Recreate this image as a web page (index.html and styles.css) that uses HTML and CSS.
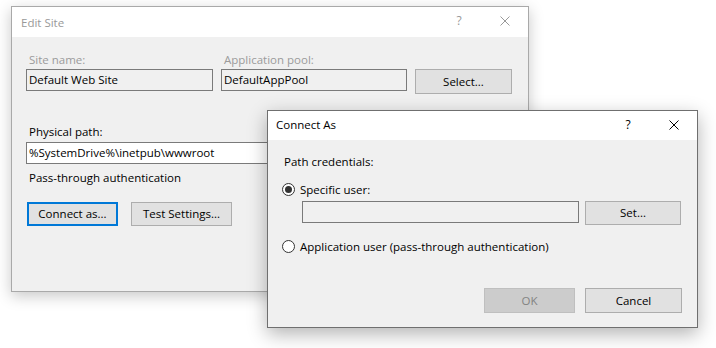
FILE: index.html
```html
<!DOCTYPE html>
<html>
<head>
<meta charset="utf-8">
<link rel="stylesheet" href="styles.css">
</head>
<body>
<div class="desktop">
  <div class="window edit-site inactive">
    <div class="titlebar">
      <span class="title">Edit Site</span>
      <div class="caption">
        <span class="cap-btn help">?</span>
        <span class="cap-btn close"><svg width="10" height="10" viewBox="0 0 10 10"><path d="M0.5 0.5 L9.5 9.5 M9.5 0.5 L0.5 9.5" stroke="currentColor" stroke-width="1" fill="none"/></svg></span>
      </div>
    </div>
    <div class="body">
      <div class="fields">
        <div class="field site">
          <div class="lbl disabled">Site name:</div>
          <div class="textbox readonly">Default Web Site</div>
        </div>
        <div class="field pool">
          <div class="lbl disabled">Application pool:</div>
          <div class="textbox readonly">DefaultAppPool</div>
        </div>
        <div class="btn select">Select...</div>
      </div>
      <div class="lbl path-lbl">Physical path:</div>
      <div class="textbox path">%SystemDrive%\inetpub\wwwroot</div>
      <div class="lbl auth">Pass-through authentication</div>
      <div class="btn-row">
        <div class="btn focused connect">Connect as...</div>
        <div class="btn test">Test Settings...</div>
      </div>
    </div>
  </div>

  <div class="window connect-as active">
    <div class="titlebar">
      <span class="title">Connect As</span>
      <div class="caption">
        <span class="cap-btn help">?</span>
        <span class="cap-btn close"><svg width="10" height="10" viewBox="0 0 10 10"><path d="M0.5 0.5 L9.5 9.5 M9.5 0.5 L0.5 9.5" stroke="currentColor" stroke-width="1" fill="none"/></svg></span>
      </div>
    </div>
    <div class="body">
      <div class="lbl cred">Path credentials:</div>
      <div class="radio-row first">
        <span class="radio checked"></span>
        <span class="radio-text">Specific user:</span>
      </div>
      <div class="user-row">
        <div class="textbox readonly user"></div>
        <div class="btn set">Set...</div>
      </div>
      <div class="radio-row second">
        <span class="radio"></span>
        <span class="radio-text">Application user (pass-through authentication)</span>
      </div>
      <div class="dlg-buttons">
        <div class="btn disabled ok">OK</div>
        <div class="btn cancel">Cancel</div>
      </div>
    </div>
  </div>
</div>
</body>
</html>
```

FILE: styles.css
```css
* { box-sizing: border-box; }
html, body {
  margin: 0;
  padding: 0;
  background: #ffffff;
}
body {
  font-family: "Open Sans", "Noto Sans", sans-serif;
  font-size: 11.5px;
  color: #000;
}
.desktop {
  position: relative;
  width: 716px;
  height: 348px;
  overflow: hidden;
}
.window {
  position: absolute;
  display: flex;
  flex-direction: column;
  background: #f0f0f0;
}
.edit-site {
  left: 11px;
  top: 6px;
  width: 518px;
  height: 286px;
  border: 1px solid #a9a9a9;
  box-shadow: 0 4px 14px rgba(0,0,0,0.22);
}
.connect-as {
  left: 267px;
  top: 110px;
  width: 431px;
  height: 218px;
  border: 1px solid #6f6f6f;
  box-shadow: 0 6px 18px rgba(0,0,0,0.3);
}
.titlebar {
  display: flex;
  align-items: center;
  height: 30px;
  background: #ffffff;
  flex: none;
}
.connect-as .titlebar { height: 29px; }
.title {
  flex: 1;
  padding-left: 9px;
  padding-top: 1px;
}
.connect-as .title { padding-left: 8px; padding-top: 0; padding-bottom: 2px; }
.inactive .titlebar { color: #999999; }
.active .titlebar { color: #000000; }
.caption {
  display: flex;
  height: 100%;
}
.cap-btn {
  width: 46px;
  height: 100%;
  display: flex;
  align-items: center;
  justify-content: center;
}
.help { font-size: 12px; padding-bottom: 3px; }
.close svg { display: block; margin-top: -2px; }

.body {
  flex: 1;
  display: flex;
  flex-direction: column;
  align-items: flex-start;
}
.lbl {
  line-height: 15px;
  height: 15px;
  margin-left: 3px;
  white-space: nowrap;
}
.lbl.disabled { color: #9b9b9b; }

.textbox {
  height: 22px;
  border: 1px solid #7a7a7a;
  background: #ffffff;
  line-height: 20px;
  padding-left: 2px;
  white-space: nowrap;
  overflow: hidden;
}
.textbox.readonly { background: #f0f0f0; }

.btn {
  height: 25px;
  border: 1px solid #adadad;
  background: #e1e1e1;
  display: flex;
  align-items: center;
  justify-content: center;
  white-space: nowrap;
  padding-bottom: 1px;
}
.btn.focused { border: 2px solid #0078d7; }
.btn.disabled {
  background: #cccccc;
  border-color: #bfbfbf;
  color: #838383;
}

/* Edit Site */
.edit-site .body { padding: 15px 0 0 14px; }
.fields {
  display: flex;
  align-items: flex-start;
  gap: 8px;
}
.field {
  display: flex;
  flex-direction: column;
  gap: 2px;
}
.site .textbox { width: 187px; }
.pool .textbox { width: 186px; }
.select { width: 97px; margin-top: 17px; }
.path-lbl { margin-top: 30px; }
.path { width: 400px; margin-top: 3px; }
.auth { margin-top: 6px; }
.btn-row {
  display: flex;
  gap: 13px;
  margin-top: 17px;
  margin-left: 1px;
}
.connect { width: 91px; height: 24px; }
.test { width: 101px; height: 24px; }

/* Connect As */
.connect-as .body { padding: 14px 15px 14px 13px; }
.cred { margin-left: 3px; }
.radio-row {
  display: flex;
  align-items: center;
  height: 16px;
  gap: 5px;
  margin-left: 1px;
}
.radio-row.first { margin-top: 12px; }
.radio-row.second { margin-top: 13px; }
.radio {
  width: 13px;
  height: 13px;
  border: 1px solid #333333;
  border-radius: 50%;
  background: #ffffff;
  display: flex;
  align-items: center;
  justify-content: center;
  flex: none;
}
.radio.checked::after {
  content: "";
  width: 7px;
  height: 7px;
  border-radius: 50%;
  background: #333333;
}
.user-row {
  display: flex;
  gap: 6px;
  margin-top: 4px;
  margin-left: 21px;
}
.user { width: 277px; }
.set { width: 96px; height: 24px; }
.dlg-buttons {
  margin-top: auto;
  align-self: flex-end;
  display: flex;
  gap: 10px;
}
.ok { width: 91px; }
.cancel { width: 97px; }
```
